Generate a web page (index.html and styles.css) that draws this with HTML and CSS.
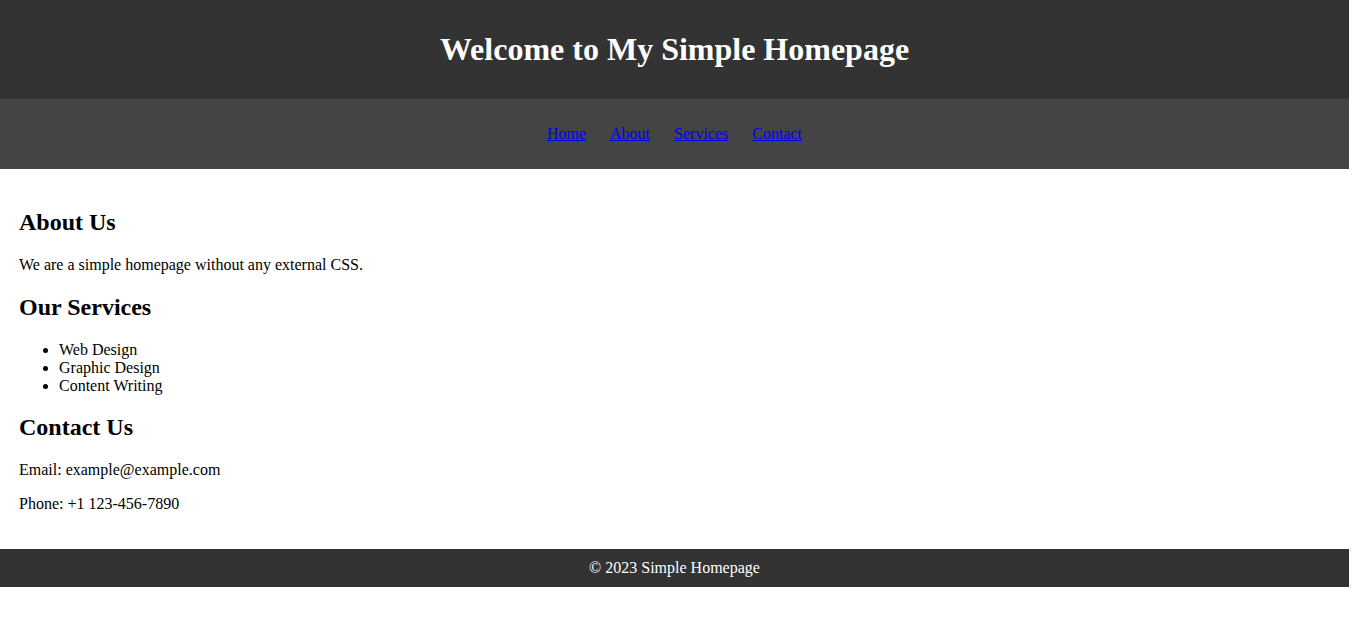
FILE: index.html
```html
<!DOCTYPE html>
<html lang="en">
<head>
<meta charset="utf-8">
<title>Simple Homepage</title>
<link rel="stylesheet" href="styles.css">
</head>
<body>
<div class="page">
  <header class="site-header">
    <h1 class="site-title">Welcome to My Simple Homepage</h1>
  </header>
  <nav class="site-nav">
    <ul class="nav-list">
      <li class="nav-item"><a href="#home">Home</a></li>
      <li class="nav-item"><a href="#about">About</a></li>
      <li class="nav-item"><a href="#services">Services</a></li>
      <li class="nav-item"><a href="#contact">Contact</a></li>
    </ul>
  </nav>
  <main class="content">
    <section id="about">
      <h2 class="section-title">About Us</h2>
      <p class="text">We are a simple homepage without any external CSS.</p>
    </section>
    <section id="services">
      <h2 class="section-title">Our Services</h2>
      <ul class="service-list">
        <li>Web Design</li>
        <li>Graphic Design</li>
        <li>Content Writing</li>
      </ul>
    </section>
    <section id="contact">
      <h2 class="section-title">Contact Us</h2>
      <p class="text">Email: example@example.com</p>
      <p class="text">Phone: +1 123-456-7890</p>
    </section>
  </main>
  <footer class="site-footer">&copy; 2023 Simple Homepage</footer>
</div>
</body>
</html>
```
FILE: styles.css
```css
html, body {
  margin: 0;
  padding: 0;
  background: #fff;
}
body {
  font-family: "Liberation Serif", "Times New Roman", serif;
  font-size: 16px;
  color: #000;
}
.page {
  width: 1349px;
}
.site-header {
  background: #333;
  color: #fff;
  text-align: center;
  padding: 10px 0;
}
.site-title {
  font-size: 32px;
  margin: 21.44px 0;
  line-height: 36px;
}
.site-nav {
  background: #444;
  padding: 10px 0;
  text-align: center;
}
.nav-list {
  list-style: none;
  margin: 16px 0;
  padding: 0;
  line-height: 18px;
}
.nav-item {
  display: inline;
  margin: 0 10px;
}
.nav-item a {
  color: #0000ee;
}
.content {
  padding: 20px 19px;
}
.section-title {
  font-size: 24px;
  margin: 19.92px 0;
}
.text {
  margin: 16px 0;
}
.service-list {
  margin: 16px 0;
  padding-left: 40px;
}
.site-footer {
  background: #333;
  color: #fff;
  text-align: center;
  padding: 10px 0;
  line-height: 18px;
}
```
